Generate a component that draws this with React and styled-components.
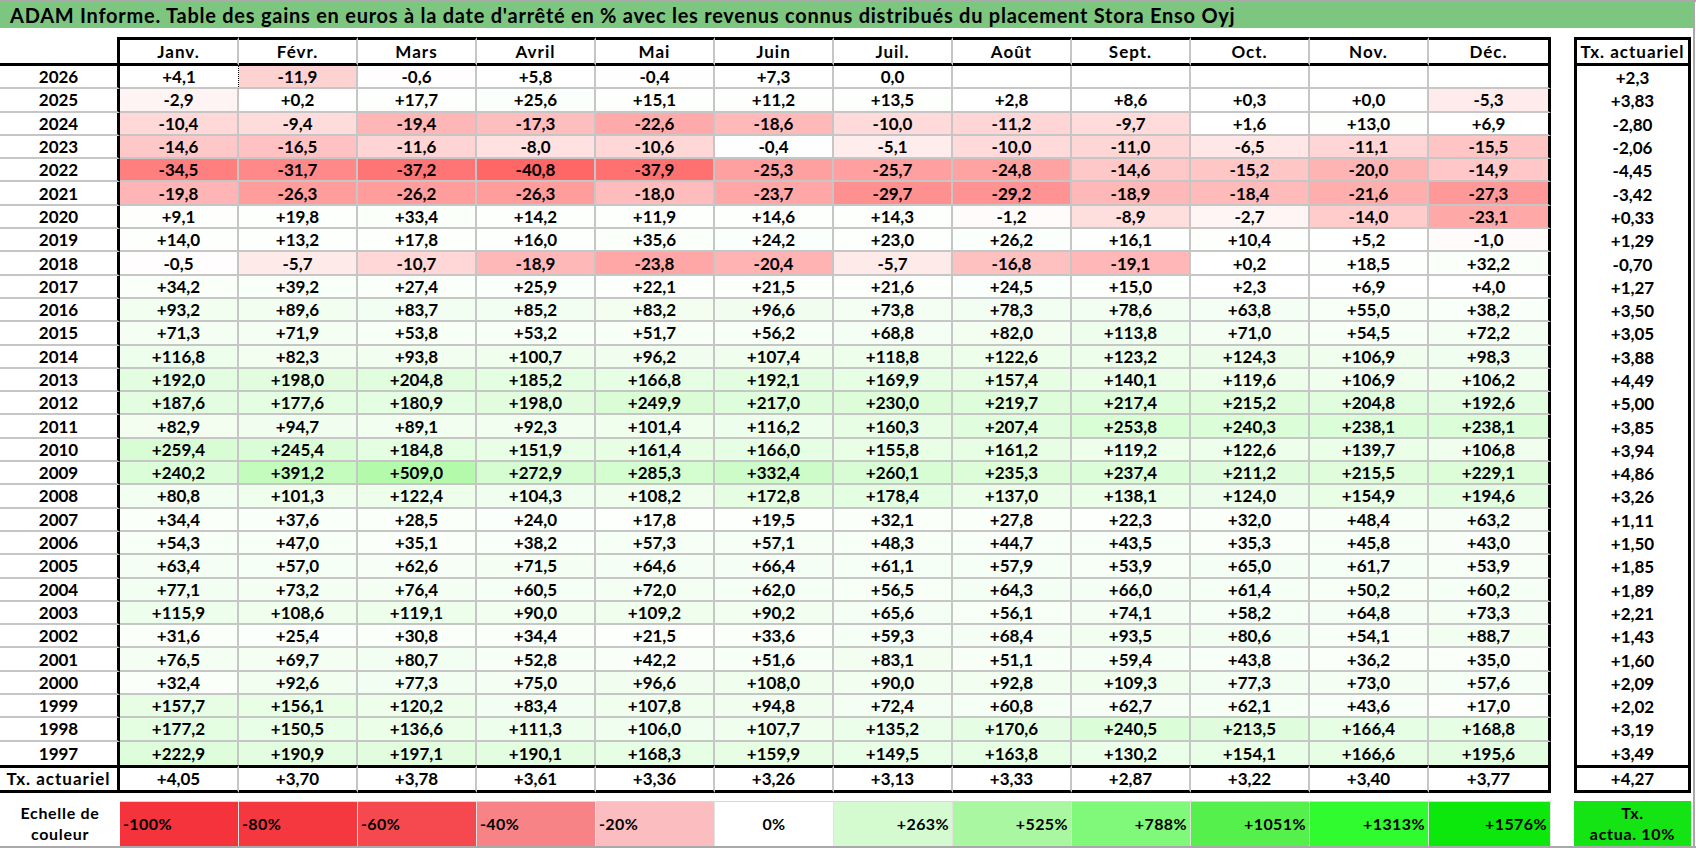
import React from 'react';
import styled, { createGlobalStyle, css } from 'styled-components';

const GlobalStyle = createGlobalStyle`
  html, body { margin: 0; padding: 0; background: #fff; }
  body { font-family: Lato, "Noto Sans", "Liberation Sans", sans-serif; color: #000; }
  * { box-sizing: border-box; }
`;

const MONTHS = ['Janv.', 'Févr.', 'Mars', 'Avril', 'Mai', 'Juin', 'Juil.', 'Août', 'Sept.', 'Oct.', 'Nov.', 'Déc.'];

const RAW = [
  ['2026', '+4,1 -11,9 -0,6 +5,8 -0,4 +7,3 0,0 _ _ _ _ _', '+2,3'],
  ['2025', '-2,9 +0,2 +17,7 +25,6 +15,1 +11,2 +13,5 +2,8 +8,6 +0,3 +0,0 -5,3', '+3,83'],
  ['2024', '-10,4 -9,4 -19,4 -17,3 -22,6 -18,6 -10,0 -11,2 -9,7 +1,6 +13,0 +6,9', '-2,80'],
  ['2023', '-14,6 -16,5 -11,6 -8,0 -10,6 -0,4 -5,1 -10,0 -11,0 -6,5 -11,1 -15,5', '-2,06'],
  ['2022', '-34,5 -31,7 -37,2 -40,8 -37,9 -25,3 -25,7 -24,8 -14,6 -15,2 -20,0 -14,9', '-4,45'],
  ['2021', '-19,8 -26,3 -26,2 -26,3 -18,0 -23,7 -29,7 -29,2 -18,9 -18,4 -21,6 -27,3', '-3,42'],
  ['2020', '+9,1 +19,8 +33,4 +14,2 +11,9 +14,6 +14,3 -1,2 -8,9 -2,7 -14,0 -23,1', '+0,33'],
  ['2019', '+14,0 +13,2 +17,8 +16,0 +35,6 +24,2 +23,0 +26,2 +16,1 +10,4 +5,2 -1,0', '+1,29'],
  ['2018', '-0,5 -5,7 -10,7 -18,9 -23,8 -20,4 -5,7 -16,8 -19,1 +0,2 +18,5 +32,2', '-0,70'],
  ['2017', '+34,2 +39,2 +27,4 +25,9 +22,1 +21,5 +21,6 +24,5 +15,0 +2,3 +6,9 +4,0', '+1,27'],
  ['2016', '+93,2 +89,6 +83,7 +85,2 +83,2 +96,6 +73,8 +78,3 +78,6 +63,8 +55,0 +38,2', '+3,50'],
  ['2015', '+71,3 +71,9 +53,8 +53,2 +51,7 +56,2 +68,8 +82,0 +113,8 +71,0 +54,5 +72,2', '+3,05'],
  ['2014', '+116,8 +82,3 +93,8 +100,7 +96,2 +107,4 +118,8 +122,6 +123,2 +124,3 +106,9 +98,3', '+3,88'],
  ['2013', '+192,0 +198,0 +204,8 +185,2 +166,8 +192,1 +169,9 +157,4 +140,1 +119,6 +106,9 +106,2', '+4,49'],
  ['2012', '+187,6 +177,6 +180,9 +198,0 +249,9 +217,0 +230,0 +219,7 +217,4 +215,2 +204,8 +192,6', '+5,00'],
  ['2011', '+82,9 +94,7 +89,1 +92,3 +101,4 +116,2 +160,3 +207,4 +253,8 +240,3 +238,1 +238,1', '+3,85'],
  ['2010', '+259,4 +245,4 +184,8 +151,9 +161,4 +166,0 +155,8 +161,2 +119,2 +122,6 +139,7 +106,8', '+3,94'],
  ['2009', '+240,2 +391,2 +509,0 +272,9 +285,3 +332,4 +260,1 +235,3 +237,4 +211,2 +215,5 +229,1', '+4,86'],
  ['2008', '+80,8 +101,3 +122,4 +104,3 +108,2 +172,8 +178,4 +137,0 +138,1 +124,0 +154,9 +194,6', '+3,26'],
  ['2007', '+34,4 +37,6 +28,5 +24,0 +17,8 +19,5 +32,1 +27,8 +22,3 +32,0 +48,4 +63,2', '+1,11'],
  ['2006', '+54,3 +47,0 +35,1 +38,2 +57,3 +57,1 +48,3 +44,7 +43,5 +35,3 +45,8 +43,0', '+1,50'],
  ['2005', '+63,4 +57,0 +62,6 +71,5 +64,6 +66,4 +61,1 +57,9 +53,9 +65,0 +61,7 +53,9', '+1,85'],
  ['2004', '+77,1 +73,2 +76,4 +60,5 +72,0 +62,0 +56,5 +64,3 +66,0 +61,4 +50,2 +60,2', '+1,89'],
  ['2003', '+115,9 +108,6 +119,1 +90,0 +109,2 +90,2 +65,6 +56,1 +74,1 +58,2 +64,8 +73,3', '+2,21'],
  ['2002', '+31,6 +25,4 +30,8 +34,4 +21,5 +33,6 +59,3 +68,4 +93,5 +80,6 +54,1 +88,7', '+1,43'],
  ['2001', '+76,5 +69,7 +80,7 +52,8 +42,2 +51,6 +83,1 +51,1 +59,4 +43,8 +36,2 +35,0', '+1,60'],
  ['2000', '+32,4 +92,6 +77,3 +75,0 +96,6 +108,0 +90,0 +92,8 +109,3 +77,3 +73,0 +57,6', '+2,09'],
  ['1999', '+157,7 +156,1 +120,2 +83,4 +107,8 +94,8 +72,4 +60,8 +62,7 +62,1 +43,6 +17,0', '+2,02'],
  ['1998', '+177,2 +150,5 +136,6 +111,3 +106,0 +107,7 +135,2 +170,6 +240,5 +213,5 +166,4 +168,8', '+3,19'],
  ['1997', '+222,9 +190,9 +197,1 +190,1 +168,3 +159,9 +149,5 +163,8 +130,2 +154,1 +166,6 +195,6', '+3,49'],
];

const ROWS = RAW.map(([year, vals, rate]) => ({
  year,
  values: vals.split(' ').map((v) => (v === '_' ? '' : v)),
  rate,
}));

const TOTALS = '+4,05 +3,70 +3,78 +3,61 +3,36 +3,26 +3,13 +3,33 +2,87 +3,22 +3,40 +3,77'.split(' ');

const LEGEND = [
  { label: '-100%', bg: '#f4333d', align: 'left' },
  { label: '-80%', bg: '#f5383f', align: 'left' },
  { label: '-60%', bg: '#f6494f', align: 'left' },
  { label: '-40%', bg: '#f88386', align: 'left' },
  { label: '-20%', bg: '#fbbdbf', align: 'left' },
  { label: '0%', bg: '#ffffff', align: 'center' },
  { label: '+263%', bg: '#d4fad0', align: 'right' },
  { label: '+525%', bg: '#a9f8a1', align: 'right' },
  { label: '+788%', bg: '#80f879', align: 'right' },
  { label: '+1051%', bg: '#55f04c', align: 'right' },
  { label: '+1313%', bg: '#2ffb2e', align: 'right' },
  { label: '+1576%', bg: '#0ce80c', align: 'right' },
];

function cellColor(str) {
  if (!str) return '#ffffff';
  const v = parseFloat(str.replace(',', '.'));
  if (v < 0) {
    const g = Math.max(0, Math.round(255 - 3.75 * -v));
    return `rgb(255,${g},${g})`;
  }
  const r = Math.max(0, Math.round(255 - 0.15 * v));
  const g = Math.max(0, Math.round(255 - 0.008 * v));
  const b = Math.max(0, Math.round(255 - 0.165 * v));
  return `rgb(${r},${g},${b})`;
}

const THICK = '3px solid #000';
const GRID = '2px solid #c6c6c6';

const Page = styled.div`
  width: 1696px;
  height: 848px;
  overflow: hidden;
  border-top: 2px solid #a9a9a9;
  border-bottom: 2px solid #a9a9a9;
  position: relative;
  display: flex;
  flex-direction: column;
`;

const RightEdge = styled.div`
  position: absolute;
  top: 0;
  bottom: 0;
  right: 1px;
  width: 2px;
  background: #a9a9a9;
`;

const TitleBar = styled.div`
  height: 26px;
  width: 1693px;
  background: #7dc67f;
  display: flex;
  align-items: center;
  padding-left: 10px;
  font-weight: 700;
  font-size: 20px;
  letter-spacing: 0.75px;
  white-space: nowrap;
  margin-bottom: 9px;
`;

const Row = styled.div`
  display: grid;
  grid-template-columns: 120px repeat(11, 119px) 122px 23px 117px;
  height: ${(p) => p.$h}px;
  font-weight: 700;
  font-size: 17px;
`;

const Label = styled.span`
  letter-spacing: 1px;
  white-space: nowrap;
`;

const kindBorders = (kind, withTop) => {
  if (kind === 'header') return css`
    ${withTop ? `border-top: ${THICK};` : ''}
    border-bottom: ${THICK};
  `;
  if (kind === 'data') return css`border-bottom: ${GRID};`;
  if (kind === 'total') return css`
    border-top: ${THICK};
    border-bottom: ${THICK};
  `;
  return css``;
};

const YearCell = styled.div`
  display: flex;
  align-items: center;
  justify-content: center;
  border-right: ${THICK};
  ${(p) => kindBorders(p.$kind, false)}
`;

const MonthCell = styled.div`
  display: flex;
  align-items: center;
  justify-content: center;
  background: ${(p) => p.$bg || '#fff'};
  border-right: ${(p) => (p.$last ? THICK : p.$dotted ? '1px dotted #000' : GRID)};
  ${(p) => kindBorders(p.$kind, true)}
`;

const Spacer = styled.div``;

const RateCell = styled.div`
  display: flex;
  align-items: center;
  justify-content: center;
  border-left: ${THICK};
  border-right: ${THICK};
  ${(p) => kindBorders(p.$kind, true)}
`;

const LegendRow = styled(Row)`
  margin-top: 8px;
  font-size: 16px;
`;

const LegendLabel = styled.div`
  display: flex;
  flex-direction: column;
  align-items: center;
  justify-content: center;
  line-height: 21px;
  letter-spacing: 0.7px;
`;

const Swatch = styled.div`
  display: flex;
  align-items: center;
  justify-content: ${(p) => (p.$align === 'left' ? 'flex-start' : p.$align === 'right' ? 'flex-end' : 'center')};
  padding: 0 3px;
  letter-spacing: 0.4px;
  background: ${(p) => p.$bg};
  border-top: 1px solid #d8d8d8;
  border-right: 1px solid #e2e2e2;
`;

const RateSwatch = styled.div`
  display: flex;
  flex-direction: column;
  align-items: center;
  justify-content: center;
  background: #14e414;
  line-height: 21px;
  letter-spacing: 0.7px;
  text-align: center;
`;

export default function App() {
  return (
    <>
      <GlobalStyle />
      <Page>
        <TitleBar>
          ADAM Informe. Table des gains en euros à la date d'arrêté en % avec les revenus connus distribués du placement Stora Enso Oyj
        </TitleBar>

        <Row $h={29}>
          <YearCell $kind="header" />
          {MONTHS.map((m, i) => (
            <MonthCell key={m} $kind="header" $last={i === 11}>
              <Label>{m}</Label>
            </MonthCell>
          ))}
          <Spacer />
          <RateCell $kind="header">
            <Label>Tx. actuariel</Label>
          </RateCell>
        </Row>

        {ROWS.map((r, ri) => {
          const kind = ri === ROWS.length - 1 ? 'lastData' : 'data';
          return (
            <Row key={r.year} $h={23.3}>
              <YearCell $kind={kind}>{r.year}</YearCell>
              {r.values.map((v, i) => (
                <MonthCell
                  key={i}
                  $kind={kind}
                  $last={i === 11}
                  $dotted={ri === 0 && i === 0}
                  $bg={cellColor(v)}
                >
                  {v}
                </MonthCell>
              ))}
              <Spacer />
              <RateCell $kind="plain">{r.rate}</RateCell>
            </Row>
          );
        })}

        <Row $h={28}>
          <YearCell $kind="total">
            <Label>Tx. actuariel</Label>
          </YearCell>
          {TOTALS.map((v, i) => (
            <MonthCell key={i} $kind="total" $last={i === 11}>
              {v}
            </MonthCell>
          ))}
          <Spacer />
          <RateCell $kind="total">+4,27</RateCell>
        </Row>

        <LegendRow $h={45}>
          <LegendLabel>
            <span>Echelle de</span>
            <span>couleur</span>
          </LegendLabel>
          {LEGEND.map((l) => (
            <Swatch key={l.label} $bg={l.bg} $align={l.align}>
              {l.label}
            </Swatch>
          ))}
          <Spacer />
          <RateSwatch>
            <span>Tx.</span>
            <span>actua. 10%</span>
          </RateSwatch>
        </LegendRow>
        <RightEdge />
      </Page>
    </>
  );
}
